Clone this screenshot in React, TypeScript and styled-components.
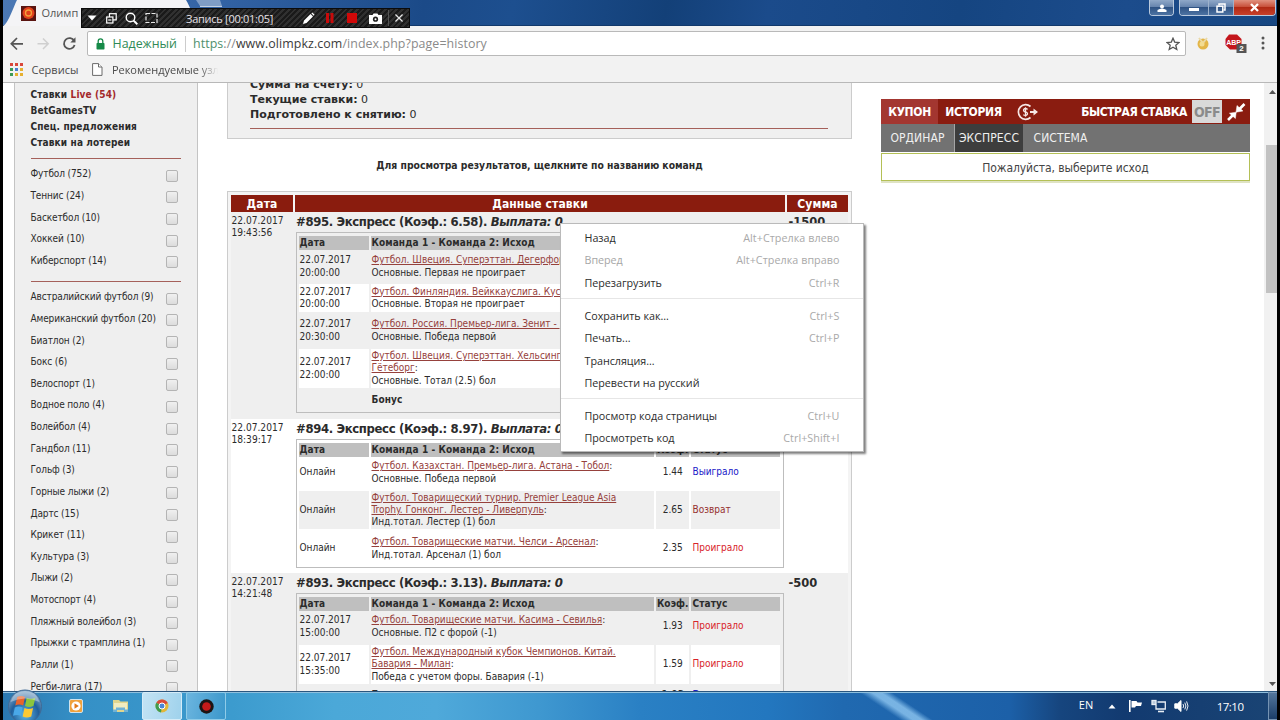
import React from "react";
import styled, { createGlobalStyle, css } from "styled-components";

const Global = createGlobalStyle`
  * { box-sizing: border-box; }
  body { margin: 0; background: #000; overflow: hidden; }
`;

const tahoma = `"DejaVu Sans Condensed", "DejaVu Sans", sans-serif`;
const verdana = `"DejaVu Sans", sans-serif`;
const segoe = `"Open Sans", "Noto Sans", sans-serif`;

const Screen = styled.div`
  width: 1280px;
  height: 720px;
  padding: 0 3px;
  background: #000;
  display: flex;
  flex-direction: column;
  overflow: hidden;
  position: relative;
  font-family: ${tahoma};
  font-size: 10px;
  color: #2b2b2b;
  white-space: nowrap;
`;

/* ---------- window title bar ---------- */
const TitleBar = styled.div`
  height: 26px;
  flex: none;
  display: flex;
  justify-content: space-between;
  align-items: flex-start;
  border-bottom: 1px solid #12396b;
  background: linear-gradient(100deg, #4b78b4 0%, #3464a6 16%, #1b4a88 33%, #1d4f8f 40%, #134078 52%, #1b4b8b 60%, #154581 75%, #1c4c8c 88%, #174782 100%);
`;
const TabArt = styled.svg`
  display: block;
`;
const Controls = styled.div`
  display: flex;
  margin-right: 1px;
`;
const ControlGroup = styled.div`
  display: flex;
  height: 16px;
  border: 1px solid #b9c9dd;
  border-top: 0;
  border-radius: 0 0 4px 4px;
  overflow: hidden;
  margin-right: 5px;
  &:last-child { margin-right: 0; }
`;
const Control = styled.div<{ $w: number; $close?: boolean }>`
  width: ${(p) => p.$w}px;
  display: flex;
  align-items: center;
  justify-content: center;
  border-left: 1px solid #9db2cc;
  background: ${(p) =>
    p.$close
      ? "linear-gradient(#e0917f 0%, #c8503a 45%, #b02a14 50%, #c8402a 100%)"
      : "linear-gradient(#8fa8c8 0%, #6785ae 45%, #2f5384 50%, #4d73a3 100%)"};
  &:first-child { border-left: 0; }
`;

/* ---------- browser toolbar ---------- */
const Toolbar = styled.div`
  height: 31px;
  flex: none;
  background: #f2f2f2;
  display: flex;
  align-items: center;
  padding: 0 6px 0 6px;
  font-family: ${segoe};
`;
const Nav = styled.div`
  width: 78px;
  display: flex;
  align-items: center;
  gap: 10px;
  padding-top: 3px;
`;
const Omnibox = styled.div`
  width: 1099px;
  height: 25px;
  margin-top: 5px;
  background: #fff;
  border: 1px solid #b9b9b9;
  border-radius: 2px;
  display: flex;
  align-items: center;
  font-size: 12.4px;
  color: #8a8a8a;
  padding: 0 5px 0 8px;
  align-self: flex-start;
`;
const Secure = styled.span`
  color: #2f8a55;
  width: 73px;
  padding-left: 7.5px;
`;
const Bar = styled.span`
  width: 1px;
  height: 16px;
  background: #ccc;
  margin: 0 7px 0 7px;
`;
const Url = styled.span`
  flex: 1;
  letter-spacing: 0.08px;
`;
const Ink = styled.span<{ $c: string }>`
  color: ${(p) => p.$c};
`;
const Extensions = styled.div`
  display: flex;
  align-items: center;
  flex: 1;
  padding: 3px 0 0 10px;
`;
const Bookmarks = styled.div`
  height: 26px;
  flex: none;
  background: #f2f2f2;
  border-bottom: 1px solid #b8b8b8;
  display: flex;
  align-items: center;
  font-family: ${segoe};
  font-size: 11px;
  color: #4a4a4a;
  padding: 0 0 0 7px;
`;
const BookmarkLabel = styled.span<{ $fade?: boolean }>`
  margin: 0 14px 0 8.5px;
  ${(p) =>
    p.$fade &&
    css`
      width: 106px;
      overflow: hidden;
      mask-image: linear-gradient(90deg, #000 82%, transparent);
    `}
`;

/* ---------- page ---------- */
const Page = styled.div`
  height: 608px;
  flex: none;
  background: #fff;
  display: flex;
  align-items: flex-start;
  overflow: hidden;
`;
const Sidebar = styled.div`
  width: 184px;
  height: 608px;
  margin-left: 11px;
  padding: 4px 16px 0 15.5px;
  background: #efefef;
  border: solid #c4c4c4;
  border-width: 0 1px;
`;
const MenuLink = styled.div`
  font: bold 10px/16px ${tahoma};
  letter-spacing: 0.13px;
`;
const Rule = styled.div<{ $m: string }>`
  height: 1px;
  background: #a5605a;
  margin: ${(p) => p.$m};
`;
const SportList = styled.div<{ $h: number }>`
  height: ${(p) => p.$h}px;
`;
const SportRow = styled.label`
  height: 21.64px;
  display: flex;
  align-items: center;
  justify-content: space-between;
  padding-right: 3px;
  letter-spacing: -0.12px;
`;
const Box = styled.span`
  width: 12px;
  height: 12px;
  margin-top: 4px;
  border: 1px solid #b4b4b4;
  border-radius: 2px;
  background: linear-gradient(#f0f0f0, #dcdcdc);
`;

const Main = styled.div`
  width: 625px;
  margin-left: 29px;
  flex: none;
`;
const Account = styled.div`
  height: 56px;
  background: #f0f0f0;
  border: 1px solid #ccc;
  border-top: 0;
  padding: 0 23px 0 22px;
  overflow: hidden;
  font-family: ${verdana};
  font-size: 11px;
  display: flex;
  flex-direction: column;
`;
const AccountLine = styled.div`
  height: 15px;
  line-height: 15px;
  flex: none;
  &:first-child { margin-top: -6px; }
`;
const Hint = styled.div`
  height: 52px;
  line-height: 53px;
  text-align: center;
  font-weight: bold;
  font-size: 10.3px;
`;
const History = styled.div`
  height: 520px;
  border: 1px solid #ccc;
  background: #f4f4f4;
  padding: 3px 3px 0;
`;
const cols = css`
  display: grid;
  grid-template-columns: 62px 490px 61px;
  column-gap: 2px;
`;
const HeadRow = styled.div`
  ${cols}
  height: 17px;
`;
const HeadCell = styled.div`
  background: #8a1c0e;
  color: #fff;
  text-align: center;
  letter-spacing: 0.1px;
  height: 17px;
  font: bold 12px/18px ${tahoma};
`;
const BetRow = styled.div<{ $h: number; $alt?: boolean }>`
  ${cols}
  height: ${(p) => p.$h}px;
  background: ${(p) => (p.$alt ? "#fff" : "#efefef")};
`;
const Stamp = styled.div`
  padding: 3px 0 0 0.5px;
  line-height: 12.3px;
  font-size: 10.1px;
`;
const BetTitle = styled.div`
  height: 20px;
  padding-left: 1px;
  font: bold 11.7px/20px ${verdana};
  letter-spacing: -0.37px;
`;
const Amount = styled.div`
  padding-left: 1.5px;
  font: bold 11.5px/20px ${verdana};
`;
const Slip = styled.div<{ $h: number }>`
  height: ${(p) => p.$h}px;
  width: 488px;
  margin-left: 1px;
  border: 1px solid #bdbdbd;
  padding: 3px 3px 0 2px;
`;
const SlipRow = styled.div<{ $h: number; $bg?: string; $gap?: number; $bold?: boolean }>`
  display: grid;
  grid-template-columns: 70px 283px 33px 89px;
  column-gap: 2px;
  height: ${(p) => p.$h}px;
  margin-bottom: ${(p) => p.$gap ?? 3}px;
  font-weight: ${(p) => (p.$bold ? "bold" : "normal")};
  letter-spacing: ${(p) => (p.$bold ? "0.1px" : "0")};
  & > div { background: ${(p) => p.$bg ?? "transparent"}; }
`;
const Cell = styled.div<{ $c?: string; $center?: boolean }>`
  display: flex;
  flex-direction: column;
  justify-content: center;
  align-items: ${(p) => (p.$center ? "center" : "flex-start")};
  padding-left: 0.5px;
  line-height: 12.2px;
  color: ${(p) => p.$c ?? "inherit"};
  &:last-child { padding-left: 1.5px; }
`;
const Team = styled.span`
  color: #96413c;
  text-decoration: underline;
`;

/* ---------- coupon ---------- */
const Coupon = styled.div`
  width: 369px;
  margin: 16px 0 0 29px;
  flex: none;
`;
const CouponHead = styled.div`
  height: 25px;
  background: #8a1c10;
  color: #fff;
  display: flex;
  align-items: center;
  font: bold 12px/25px ${tahoma};
`;
const HeadTab = styled.div<{ $w: number; $on?: boolean }>`
  width: ${(p) => p.$w}px;
  text-align: center;
  letter-spacing: -0.35px;
  height: 25px;
  line-height: 26px;
  background: ${(p) => (p.$on ? "#a33630" : "transparent")};
`;
const Quick = styled.div`
  flex: 1;
  text-align: right;
  padding-right: 5px;
  letter-spacing: -0.45px;
  line-height: 26px;
`;
const Off = styled.div`
  width: 30px;
  height: 23px;
  background: #d9d9d9;
  color: #8b8b8b;
  text-align: center;
  font: bold 14px/24px ${tahoma};
  letter-spacing: -0.6px;
`;
const Modes = styled.div`
  height: 28px;
  background: #727272;
  color: #f0f0f0;
  display: flex;
  font: 12px/29px ${tahoma};
`;
const Mode = styled.div<{ $w: number; $on?: boolean }>`
  width: ${(p) => p.$w}px;
  height: 28px;
  text-align: center;
  letter-spacing: 0.1px;
  border-left: ${(p) => (p.$on ? "1px solid #a5a5a5" : "0")};
  background: ${(p) => (p.$on ? "#3d3d3d" : "transparent")};
`;
const Prompt = styled.div`
  margin-top: 1px;
  height: 28px;
  border: 1px solid #b4c056;
  box-shadow: 0 2px 0 #dfe3c4;
  text-align: center;
  font-size: 12px;
  letter-spacing: -0.1px;
  line-height: 28px;
  color: #444;
`;
const Scroll = styled.div`
  margin-left: auto;
  width: 13px;
  height: 608px;
  background: #f1f1f1;
  display: flex;
  flex-direction: column;
  align-items: flex-end;
  padding: 6px 0 4px;
`;
const Thumb = styled.div`
  width: 11px;
  height: 148px;
  margin: 50px 0 auto;
  background: #c2c2c2;
`;

/* ---------- taskbar ---------- */
const Taskbar = styled.div`
  height: 29px;
  flex: none;
  border-top: 1px solid #2a567f;
  box-shadow: inset 0 1px 0 #8fc0de;
  background:
    linear-gradient(33.7deg, transparent 498px, rgba(150, 205, 245, 0.75) 505px, rgba(150, 205, 245, 0.75) 510px, transparent 516px),
    linear-gradient(90deg, #2b78b0 0%, #3590c6 6%, #3c9bce 18%, #4ba8d8 26%, #4fa9da 34%, #3f98d0 42%, #2a80c4 50%, #2377bf 60%, #2069b0 66%, #1c60a8 79%, #16457e 83%, #123a70 88%, #1a4474 100%);
  display: flex;
  align-items: center;
  color: #fff;
  font-family: ${segoe};
`;
const Task = styled.div<{ $w: number; $state?: "on" | "open" }>`
  width: ${(p) => p.$w}px;
  height: 28px;
  display: flex;
  align-items: center;
  justify-content: center;
  border-radius: 2px;
  ${(p) =>
    p.$state &&
    css`
      margin-right: 4px;
      border: 1px solid ${p.$state === "on" ? "#d5ecf8" : "#8fcbe8"};
      background: ${p.$state === "on"
        ? "linear-gradient(100deg, #c3e3f4, #9fd2ec)"
        : "linear-gradient(100deg, #6bb5df, #3b97cb)"};
    `}
`;
const Tray = styled.div`
  margin-left: auto;
  display: flex;
  align-items: center;
  height: 28px;
`;
const Lang = styled.span`
  font-size: 11px;
  margin: -4px 14.5px 0 0;
`;
const Clock = styled.span`
  font-size: 11.5px;
  letter-spacing: -0.5px;
  margin: 1px 24.5px 0 28px;
`;
const Desktop = styled.div`
  width: 9px;
  height: 28px;
  border: 1px solid #7593b3;
  border-right: 0;
  background: linear-gradient(#53769c, #1b3d68);
`;
const Orb = styled.svg`
  position: absolute;
  left: 6px;
  top: 688px;
`;

/* ---------- overlays ---------- */
const Recorder = styled.div`
  position: absolute;
  left: 81px;
  top: 8px;
  width: 329px;
  height: 20px;
  border: 1px solid #0b0b0b;
  background: repeating-linear-gradient(135deg, #1a1a1a 0 2px, #303030 2px 4px);
  color: #e6e0e6;
  display: flex;
  align-items: center;
  font: 500 11px/19px ${segoe};
`;
const RecIcon = styled.svg<{ $l: number }>`
  margin-left: ${(p) => p.$l}px;
  flex: none;
`;
const RecLabel = styled.span`
  margin-left: 28px;
  width: 88px;
  letter-spacing: -0.27px;
`;
const Menu = styled.div`
  position: absolute;
  left: 560px;
  top: 223px;
  width: 304px;
  height: 229px;
  background: #fff;
  border: 1px solid #bababa;
  box-shadow: 2px 2px 2px rgba(0, 0, 0, 0.5);
  padding: 2px 0;
  font: 10.75px ${segoe};
  color: #2c2c2c;
`;
const MenuItem = styled.div<{ $off?: boolean }>`
  height: 22.5px;
  display: flex;
  align-items: center;
  justify-content: space-between;
  padding: 1.2px 23.5px 0;
  letter-spacing: -0.03px;
  color: ${(p) => (p.$off ? "#a6a6a6" : "inherit")};
`;
const Keys = styled.span`
  color: #a9a9a9;
  letter-spacing: 0.05px;
`;
const Split = styled.div`
  height: 1px;
  margin: 4px 0 5.3px;
  background: #e6e6e6;
`;

const topSports = ["Футбол (752)", "Теннис (24)", "Баскетбол (10)", "Хоккей (10)", "Киберспорт (14)"];
const sports = [
  "Австралийский футбол (9)", "Американский футбол (20)", "Биатлон (2)", "Бокс (6)", "Велоспорт (1)",
  "Водное поло (4)", "Волейбол (4)", "Гандбол (11)", "Гольф (3)", "Горные лыжи (2)", "Дартс (15)",
  "Крикет (11)", "Культура (3)", "Лыжи (2)", "Мотоспорт (4)", "Пляжный волейбол (3)",
  "Прыжки с трамплина (1)", "Ралли (1)", "Регби-лига (17)",
];

const RED = "#d8232a";
const BLUE = "#2020c8";

type Leg = {
  h: number;
  bg?: string;
  gap?: number;
  date?: string[];
  team?: string[];
  pick?: string;
  odd?: string;
  status?: string;
  color?: string;
  bonus?: boolean;
};
type Bet = { id: number; odds: string; h: number; slip: number; alt?: boolean; date: string[]; sum: string; legs: Leg[] };

const bets: Bet[] = [
  {
    id: 895, odds: "6.58", h: 207, slip: 181, date: ["22.07.2017", "19:43:56"], sum: "-1500",
    legs: [
      { h: 29, gap: 3, date: ["22.07.2017", "20:00:00"], team: ["Футбол. Швеция. Суперэттан. Дегерфорс"], pick: "Основные. Первая не проиграет" },
      { h: 28, bg: "#fff", gap: 2, date: ["22.07.2017", "20:00:00"], team: ["Футбол. Финляндия. Вейккауслига. Кусю"], pick: "Основные. Вторая не проиграет" },
      { h: 33, gap: 2, date: ["22.07.2017", "20:30:00"], team: ["Футбол. Россия. Премьер-лига. Зенит - "], pick: "Основные. Победа первой" },
      { h: 39, bg: "#fff", gap: 2, date: ["22.07.2017", "22:00:00"], team: ["Футбол. Швеция. Суперэттан. Хельсингб", "Гётеборг"], pick: "Основные. Тотал (2.5) бол" },
      { h: 21, bonus: true },
    ],
  },
  {
    id: 894, odds: "8.97", h: 154, slip: 129, alt: true, date: ["22.07.2017", "18:39:17"], sum: "",
    legs: [
      { h: 27, gap: 5, date: ["Онлайн"], team: ["Футбол. Казахстан. Премьер-лига. Астана - Тобол"], pick: "Основные. Победа первой", odd: "1.44", status: "Выиграло", color: BLUE },
      { h: 38, bg: "#efefef", date: ["Онлайн"], team: ["Футбол. Товарищеский турнир. Premier League Asia", "Trophy. Гонконг. Лестер - Ливерпуль"], pick: "Инд.тотал. Лестер (1) бол", odd: "2.65", status: "Возврат", color: "#96312f" },
      { h: 33, date: ["Онлайн"], team: ["Футбол. Товарищеские матчи. Челси - Арсенал"], pick: "Инд.тотал. Арсенал (1) бол", odd: "2.35", status: "Проиграло", color: RED },
    ],
  },
  {
    id: 893, odds: "3.13", h: 140, slip: 140, date: ["22.07.2017", "14:21:48"], sum: "-500",
    legs: [
      { h: 27, gap: 5, date: ["22.07.2017", "15:00:00"], team: ["Футбол. Товарищеские матчи. Касима - Севилья"], pick: "Основные. П2 с форой (-1)", odd: "1.93", status: "Проиграло", color: RED },
      { h: 39, bg: "#fff", gap: 2, date: ["22.07.2017", "15:35:00"], team: ["Футбол. Международный кубок Чемпионов. Китай.", "Бавария - Милан"], pick: "Победа с учетом форы. Бавария (-1)", odd: "1.59", status: "Проиграло", color: RED },
      { h: 18, bonus: true, odd: "1.03", status: "Выиграло", color: BLUE },
    ],
  },
];

const SlipTable = ({ bet }: { bet: Bet }) => (
  <Slip $h={bet.slip}>
    <SlipRow $h={14} $bg="#bfbfbf" $gap={2} $bold>
      <Cell>Дата</Cell>
      <Cell>Команда 1 - Команда 2: Исход</Cell>
      <Cell $center>Коэф.</Cell>
      <Cell>Статус</Cell>
    </SlipRow>
    {bet.legs.map((leg, i) => (
      <SlipRow key={i} $h={leg.h} $bg={leg.bg} $gap={leg.gap} $bold={leg.bonus}>
        <Cell>{leg.date?.map((d) => <span key={d}>{d}</span>)}</Cell>
        <Cell>
          {leg.bonus && <span>Бонус</span>}
          {leg.team?.map((t, n) => (
            <span key={t}>
              <Team>{t}</Team>
              {n === leg.team!.length - 1 && ":"}
            </span>
          ))}
          {leg.pick && <span>{leg.pick}</span>}
        </Cell>
        <Cell $center>{leg.odd}</Cell>
        <Cell $c={leg.color}>{leg.status}</Cell>
      </SlipRow>
    ))}
  </Slip>
);

export default function App() {
  return (
    <Screen>
      <Global />
      <TitleBar>
        <TabArt width="225" height="26" viewBox="0 0 225 26">
          <path d="M0 26 C5 24 10 8 14 0 H183 C187 6 190 18 198 26 Z" fill="#f4f4f6" />
          <path d="M193 0 H217 L219 6 H197 Z" fill="#7f9dc6" />
          <path d="M197 6.5 H219" stroke="#c3d0e2" />
          <rect x="18" y="6" width="15" height="15" fill="#5a1410" />
          <circle cx="25.5" cy="13" r="6" fill="#e0401c" />
          <circle cx="25.5" cy="13" r="3" fill="none" stroke="#f2a23a" strokeWidth="1.3" />
          <text x="38.5" y="17" fontFamily="Open Sans" fontSize="11" fill="#555">Олимп</text>
        </TabArt>
        <Controls>
          <ControlGroup>
            <Control $w={23}>
              <svg width="10" height="10" viewBox="0 0 10 10"><circle cx="5" cy="3.4" r="2" fill="#fff" /><path d="M0.5 9 V7 Q5 4 9.5 7 V9Z" fill="#fff" /></svg>
            </Control>
          </ControlGroup>
          <ControlGroup>
            <Control $w={28}>
              <svg width="10" height="10" viewBox="0 0 10 10"><rect x="0" y="5" width="10" height="3" fill="#fff" /></svg>
            </Control>
            <Control $w={25}>
              <svg width="10" height="10" viewBox="0 0 10 10" fill="none" stroke="#fff" strokeWidth="1.5"><path d="M3 2.5V1H9V7H7.5" /><rect x="1" y="3.2" width="5.8" height="5.8" /></svg>
            </Control>
            <Control $w={42} $close>
              <svg width="9" height="9" viewBox="0 0 9 9" stroke="#fff" strokeWidth="2.3"><path d="M1 1L8 8M8 1L1 8" /></svg>
            </Control>
          </ControlGroup>
        </Controls>
      </TitleBar>

      <Toolbar>
        <Nav>
          <svg width="16" height="16" viewBox="0 0 16 16" fill="none" stroke="#555" strokeWidth="1.7"><path d="M14 8.8H2.5M8 3L2.3 8.8L8 14.5" /></svg>
          <svg width="16" height="16" viewBox="0 0 16 16" fill="none" stroke="#cfcfcf" strokeWidth="1.5"><path d="M2.5 8.8H13M8 3.5L13.2 8.8L8 14" /></svg>
          <svg width="16" height="16" viewBox="0 0 16 16" fill="none" stroke="#555" strokeWidth="1.8"><path d="M13.2 6A5.4 5.4 0 1 0 13.6 10" /><path d="M14.5 2.2V7.4H9.3Z" fill="#555" stroke="none" /></svg>
        </Nav>
        <Omnibox>
          <svg width="9" height="12" viewBox="0 0 9 12"><rect x="0.5" y="5" width="8" height="6.5" rx="0.7" fill="#168a48" /><path d="M2.2 5.5V3.2a2.3 2.3 0 0 1 4.6 0V5.5" fill="none" stroke="#168a48" strokeWidth="1.3" /></svg>
          <Secure>Надежный</Secure>
          <Bar />
          <Url><Ink $c="#4e8f6c">https</Ink>://<Ink $c="#3b3b3b">www.olimpkz.com</Ink>/index.php?page=history</Url>
          <svg width="14" height="14" viewBox="0 0 14 14" fill="none" stroke="#555" strokeWidth="1.3"><path d="M7 1.2L8.7 5.1L13 5.5L9.8 8.3L10.8 12.5L7 10.2L3.2 12.5L4.2 8.3L1 5.5L5.3 5.1Z" /></svg>
        </Omnibox>
        <Extensions>
          <svg width="14" height="16" viewBox="0 0 14 16"><circle cx="7" cy="9" r="5.5" fill="#e3b548" /><path d="M3 3l4 5 4-5" fill="none" stroke="#ead9a6" strokeWidth="2" /><circle cx="6" cy="9" r="2.5" fill="#f3dc92" /></svg>
          <svg width="24" height="22" viewBox="0 0 24 22" style={{ marginLeft: 14 }}>
            <path d="M5 2.5H13L17.5 7V13L13 17.5H6L1.5 13V7Z" fill="#c4161c" />
            <text x="2.2" y="12.8" fontFamily="Liberation Sans" fontWeight="bold" fontSize="7" fill="#fff">ABP</text>
            <rect x="12.5" y="12" width="10" height="9" fill="#555" />
            <text x="15.3" y="19.4" fontFamily="Liberation Sans" fontWeight="bold" fontSize="8" fill="#fff">2</text>
          </svg>
          <svg width="4" height="14" viewBox="0 0 4 14" fill="#555" style={{ marginLeft: 13 }}><circle cx="2" cy="2" r="1.5" /><circle cx="2" cy="7" r="1.5" /><circle cx="2" cy="12" r="1.5" /></svg>
        </Extensions>
      </Toolbar>

      <Bookmarks>
        <svg width="13" height="13" viewBox="0 0 13 13">
          {["#d9483b", "#d9483b", "#d9483b", "#3c9a55", "#4a7fd0", "#e6b030", "#3c9a55", "#e6b030", "#e6b030"].map((c, i) => (
            <rect key={i} x={(i % 3) * 5} y={Math.floor(i / 3) * 5} width="3" height="3" fill={c} />
          ))}
        </svg>
        <BookmarkLabel>Сервисы</BookmarkLabel>
        <svg width="11" height="13" viewBox="0 0 11 13" fill="#fff" stroke="#6a6a6a"><path d="M0.6 0.6H6.5L10 4V12.4H0.6Z" /><path d="M6.5 0.6V4H10" /></svg>
        <BookmarkLabel $fade>Рекомендуемые узлы</BookmarkLabel>
      </Bookmarks>

      <Page>
        <Sidebar>
          <MenuLink>Ставки <Ink $c="#a3282a">Live (54)</Ink></MenuLink>
          <MenuLink>BetGamesTV</MenuLink>
          <MenuLink>Спец. предложения</MenuLink>
          <MenuLink>Ставки на лотереи</MenuLink>
          <Rule $m="7px 0 4px" />
          <SportList $h={108}>
            {topSports.map((s) => <SportRow key={s}>{s}<Box /></SportRow>)}
          </SportList>
          <Rule $m="10px 0 4px" />
          <SportList $h={411}>
            {sports.map((s) => <SportRow key={s}>{s}<Box /></SportRow>)}
          </SportList>
        </Sidebar>

        <Main>
          <Account>
            <AccountLine><b>Сумма на счету:</b> 0</AccountLine>
            <AccountLine><b>Текущие ставки:</b> 0</AccountLine>
            <AccountLine><b>Подготовлено к снятию:</b> 0</AccountLine>
            <Rule $m="6px 0 0" />
          </Account>
          <Hint>Для просмотра результатов, щелкните по названию команд</Hint>
          <History>
            <HeadRow>
              <HeadCell>Дата</HeadCell>
              <HeadCell>Данные ставки</HeadCell>
              <HeadCell>Сумма</HeadCell>
            </HeadRow>
            {bets.map((b) => (
              <BetRow key={b.id} $h={b.h} $alt={b.alt}>
                <Stamp>{b.date[0]}<br />{b.date[1]}</Stamp>
                <div>
                  <BetTitle>#{b.id}. Экспресс (Коэф.: {b.odds}). <i>Выплата: 0</i></BetTitle>
                  <SlipTable bet={b} />
                </div>
                <Amount>{b.sum}</Amount>
              </BetRow>
            ))}
          </History>
        </Main>

        <Coupon>
          <CouponHead>
            <HeadTab $w={57} $on>КУПОН</HeadTab>
            <HeadTab $w={71}>ИСТОРИЯ</HeadTab>
            <svg width="24" height="20" viewBox="0 0 24 20" fill="none" stroke="#f6e6e4" strokeWidth="1.7" style={{ marginLeft: 7 }}>
              <path d="M14.5 4.5A7.3 7.3 0 1 0 14.5 15.5" /><path d="M14 10H21" strokeWidth="2" /><path d="M17.5 6.5L22 10L17.5 13.5Z" fill="#f6e6e4" stroke="none" />
              <path d="M11.6 7.4Q9 5.6 7.6 7.6Q7.2 9.4 9.4 10Q12 10.6 11.4 12.4Q10 14.4 7.2 12.8M9.5 5.2V14.8" strokeWidth="1.3" />
            </svg>
            <Quick>БЫСТРАЯ СТАВКА</Quick>
            <Off>OFF</Off>
            <svg width="28" height="18" viewBox="0 0 28 18" fill="#fff" stroke="#fff" strokeWidth="2.6">
              <path d="M22.5 1L17.5 6M6 17L11 12" /><path d="M15 2.5L14 9.2L21 8ZM13.4 15.5L14.2 9.2L7.4 10.2Z" strokeWidth="0.5" />
            </svg>
          </CouponHead>
          <Modes>
            <Mode $w={73}>ОРДИНАР</Mode>
            <Mode $w={69} $on>ЭКСПРЕСС</Mode>
            <Mode $w={75}>СИСТЕМА</Mode>
          </Modes>
          <Prompt>Пожалуйста, выберите исход</Prompt>
        </Coupon>

        <Scroll>
          <svg width="10" height="6" viewBox="0 0 10 6"><path d="M2 5L5.5 1L9 5Z" fill="#555" /></svg>
          <Thumb />
          <svg width="10" height="6" viewBox="0 0 10 6"><path d="M2 1L5.5 5L9 1Z" fill="#555" /></svg>
        </Scroll>
      </Page>

      <Taskbar>
        <Task $w={51} />
        <Task $w={44}>
          <svg width="14" height="14" viewBox="0 0 14 14"><rect x="0.5" y="0.5" width="13" height="13" rx="1.5" fill="#f0a23c" stroke="#cfe3ee" /><circle cx="7" cy="7" r="4.6" fill="#fff" /><path d="M5.5 4.3L9.8 7L5.5 9.7Z" fill="#e07818" /></svg>
        </Task>
        <Task $w={44}>
          <svg width="17" height="14" viewBox="0 0 17 14"><path d="M1 1H7L8.5 2.5H16V13H1Z" fill="#dfd58e" /><rect x="2" y="4" width="13" height="7" fill="#f0ecc0" /><path d="M1 13V10.5H4V8.5H13V10.5H16V13H12V11H5V13Z" fill="#6fb2d6" /></svg>
        </Task>
        <Task $w={40} $state="on">
          <svg width="14" height="14" viewBox="0 0 14 14"><circle cx="7" cy="7" r="6.5" fill="#e2b73a" /><path d="M7 7L1.3 3.8A6.5 6.5 0 0 1 12.8 4Z" fill="#d84a3a" /><path d="M7 7L1.3 3.8A6.5 6.5 0 0 0 6 13.4Z" fill="#3f9c50" /><circle cx="7" cy="7" r="3" fill="#4a86d8" stroke="#fff" /></svg>
        </Task>
        <Task $w={40} $state="open">
          <svg width="15" height="15" viewBox="0 0 15 15"><circle cx="7.5" cy="7.5" r="7.2" fill="#1c1414" /><circle cx="7.5" cy="7.5" r="4.3" fill="#c41a1a" /></svg>
        </Task>
        <Tray>
          <Lang>EN</Lang>
          <svg width="8" height="5" viewBox="0 0 8 5"><path d="M0.5 4.5L4 0.5L7.5 4.5Z" fill="#fff" /></svg>
          <svg width="15" height="14" viewBox="0 0 15 14" fill="#fff" style={{ marginLeft: 12 }}><rect x="1" y="1" width="1.6" height="12" /><path d="M3.5 2H8.5L9.5 3.5H14L13 7H8L7 8.5H3.5Z" /></svg>
          <svg width="16" height="14" viewBox="0 0 16 14" fill="none" stroke="#e8eef5" strokeWidth="1.3" style={{ marginLeft: 8 }}><path d="M6.5 3H14.3V10H5V6" /><path d="M7 12.5H13" strokeWidth="1.6" /><rect x="1" y="1.5" width="4" height="4" fill="#b8c8da" /></svg>
          <svg width="15" height="14" viewBox="0 0 15 14" fill="none" stroke="#fff" style={{ marginLeft: 7 }}><path d="M0.8 4.8H3.5L7 1.5V12.5L3.5 9.2H0.8Z" fill="#fff" /><path d="M9 5Q10.3 7 9 9M10.8 3.6Q13 7 10.8 10.4M12.6 2.4Q15.4 7 12.6 11.6" strokeWidth="0.9" /></svg>
          <Clock>17:10</Clock>
          <Desktop />
        </Tray>
      </Taskbar>

      <Orb width="38" height="32" viewBox="0 0 38 32">
        <defs>
          <radialGradient id="orb" cx="0.5" cy="0.75" r="0.7">
            <stop offset="0" stopColor="#5fb8e8" />
            <stop offset="0.6" stopColor="#1f5f9c" />
            <stop offset="1" stopColor="#7fa5c6" />
          </radialGradient>
        </defs>
        <circle cx="19" cy="18.5" r="16.5" fill="url(#orb)" stroke="#416a94" />
        <g transform="translate(-5.7 -5.3) scale(1.3)">
          <path d="M13 11Q16 9.5 19 11L17.6 17.5Q14.5 16 11.5 17.5Z" fill="#e8642c" />
          <path d="M20.3 11.5Q23.5 13 27 11.5L25.5 18Q22 19.5 19 18Z" fill="#8cc63e" />
          <path d="M11.2 19Q14 17.5 17.2 19L15.8 25.5Q13 24 9.8 25.5Z" fill="#4aa8e8" />
          <path d="M18.6 19.5Q21.8 21 25.2 19.5L23.8 26Q20.5 27.5 17.2 26Z" fill="#fbc934" />
        </g>
        <path d="M4.5 14Q8 3 19 3T33.5 14Q19 7 4.5 14Z" fill="#fff" opacity="0.35" />
      </Orb>

      <Recorder>
        <RecIcon $l={5} width="10" height="6" viewBox="0 0 10 6"><path d="M0.5 0.5H9.5L5 5.5Z" fill="#fff" /></RecIcon>
        <RecIcon $l={9} width="11" height="11" viewBox="0 0 11 11" fill="none" stroke="#fff" strokeWidth="1.2"><rect x="3.5" y="0.7" width="6.7" height="6.2" /><rect x="0.7" y="4" width="6.2" height="6" fill="#222" /><path d="M2.2 7H5.4" /></RecIcon>
        <RecIcon $l={8} width="13" height="13" viewBox="0 0 13 13" fill="none" stroke="#fff" strokeWidth="1.4"><circle cx="5.5" cy="5.5" r="4.3" /><path d="M8.6 8.6L12.3 12.3" strokeWidth="2" /></RecIcon>
        <RecIcon $l={7} width="13" height="12" viewBox="0 0 13 12" fill="none" stroke="#e8e8e8" strokeWidth="1.2"><rect x="1" y="1.5" width="11" height="9" strokeDasharray="4 1.5" /></RecIcon>
        <RecLabel>Запись [00:01:05]</RecLabel>
        <RecIcon $l={28} width="13" height="13" viewBox="0 0 13 13" fill="#fff"><path d="M1 12L2 8.5L8.5 2L11 4.5L4.5 11ZM9.3 1.3L10.3 0.4L12.6 2.7L11.7 3.7Z" /></RecIcon>
        <RecIcon $l={11} width="8" height="10" viewBox="0 0 8 10" fill="#c80a0a"><rect width="3" height="10" /><rect x="4.5" width="3" height="10" /></RecIcon>
        <RecIcon $l={12.5} width="10" height="10" viewBox="0 0 10 10"><rect width="10" height="10" fill="#d00808" /></RecIcon>
        <RecIcon $l={12} width="13" height="11" viewBox="0 0 13 11"><path d="M0 2H3.5L4.5 0.5H8.5L9.5 2H13V11H0Z" fill="#fff" /><circle cx="6.5" cy="6.2" r="2.6" fill="#222" /><circle cx="6.5" cy="6.2" r="1" fill="#fff" /></RecIcon>
        <RecIcon $l={6} width="1" height="16" viewBox="0 0 1 16"><rect width="1" height="16" fill="#555" /></RecIcon>
        <RecIcon $l={6} width="8" height="8" viewBox="0 0 9 9" stroke="#e8e8e8" strokeWidth="1.4"><path d="M0.5 0.5L8.5 8.5M8.5 0.5L0.5 8.5" /></RecIcon>
      </Recorder>

      <Menu>
        <MenuItem>Назад<Keys>Alt+Стрелка влево</Keys></MenuItem>
        <MenuItem $off>Вперед<Keys>Alt+Стрелка вправо</Keys></MenuItem>
        <MenuItem>Перезагрузить<Keys>Ctrl+R</Keys></MenuItem>
        <Split />
        <MenuItem>Сохранить как...<Keys>Ctrl+S</Keys></MenuItem>
        <MenuItem>Печать...<Keys>Ctrl+P</Keys></MenuItem>
        <MenuItem>Трансляция...</MenuItem>
        <MenuItem>Перевести на русский</MenuItem>
        <Split />
        <MenuItem>Просмотр кода страницы<Keys>Ctrl+U</Keys></MenuItem>
        <MenuItem>Просмотреть код<Keys>Ctrl+Shift+I</Keys></MenuItem>
      </Menu>
    </Screen>
  );
}
